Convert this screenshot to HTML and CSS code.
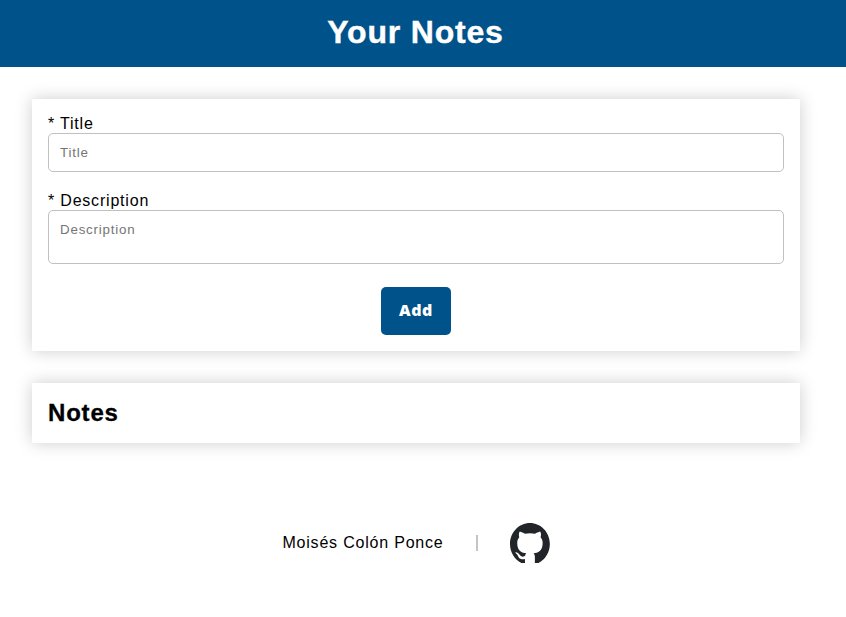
FILE: index.html
```html
<!DOCTYPE html>
<html lang="en">
<head>
<meta charset="utf-8">
<title>Your Notes</title>
<link rel="stylesheet" href="styles.css">
</head>
<body>
<header class="header"><h1>Your Notes</h1></header>
<main class="main">
  <form class="card form">
    <div class="field">
      <label for="title">* Title</label>
      <input id="title" type="text" placeholder="Title">
    </div>
    <div class="field">
      <label for="description">* Description</label>
      <textarea id="description" placeholder="Description"></textarea>
    </div>
    <button class="add" type="button">Add</button>
  </form>
  <section class="card notes"><h2>Notes</h2></section>
</main>
<footer class="footer">
  <span class="author">Moisés Colón Ponce</span>
  <span class="divider"></span>
  <svg class="github" viewBox="0 0 98 96" preserveAspectRatio="none" aria-label="GitHub"><path fill="#212529" fill-rule="evenodd" d="M48.854 0C21.839 0 0 22 0 49.217c0 21.756 13.993 40.172 33.405 46.69 2.427.49 3.316-1.059 3.316-2.362 0-1.141-.08-5.052-.08-9.127-13.59 2.934-16.42-5.867-16.42-5.867-2.184-5.704-5.42-7.17-5.42-7.17-4.448-3.015.324-3.015.324-3.015 4.934.326 7.523 5.052 7.523 5.052 4.367 7.496 11.404 5.378 14.235 4.074.404-3.178 1.699-5.378 3.074-6.6-10.839-1.141-22.243-5.378-22.243-24.283 0-5.378 1.94-9.778 5.014-13.2-.485-1.222-2.184-6.275.486-13.038 0 0 4.125-1.304 13.426 5.052a46.97 46.97 0 0 1 12.214-1.63c4.125 0 8.33.571 12.213 1.63 9.302-6.356 13.427-5.052 13.427-5.052 2.67 6.763.97 11.816.485 13.038 3.155 3.422 5.015 7.822 5.015 13.2 0 18.905-11.404 23.06-22.324 24.283 1.78 1.548 3.316 4.481 3.316 9.126 0 6.6-.08 11.897-.08 13.526 0 1.304.89 2.853 3.316 2.364 19.412-6.52 33.405-24.935 33.405-46.691C97.707 22 75.788 0 48.854 0z"/></svg>
</footer>
</body>
</html>
```

FILE: styles.css
```css
* { box-sizing: border-box; margin: 0; padding: 0; }
body {
  font-family: "Liberation Sans", Arial, sans-serif;
  font-size: 16px;
  letter-spacing: 0.8px;
  color: #000;
  background: #fff;
}
.header {
  height: 67px;
  padding: 14px 15px 0 0;
  background: #00528a;
  color: #fff;
  text-align: center;
}
.header h1 {
  font-size: 32px;
  line-height: 37px;
  -webkit-text-stroke: 0.4px #fff;
}
.main {
  width: 768px;
  margin: 32px 0 0 32px;
  display: flex;
  flex-direction: column;
  gap: 32px;
}
.card { background: #fff; box-shadow: 0 0 16px rgba(0, 0, 0, .2); padding: 16px; }
.form { height: 252px; display: flex; flex-direction: column; }
.field { display: flex; flex-direction: column; }
.field + .field { margin-top: 20px; }
.field label { line-height: 18px; }
.field input, .field textarea {
  width: 100%;
  border: 1px solid #c0c0c0;
  border-radius: 5px;
  padding: 11px;
  font: 13.333px/15px "Liberation Sans", Arial, sans-serif;
  letter-spacing: 0.8px;
  resize: none;
}
.field input { height: 39px; }
.field textarea { height: 54px; }
.field ::placeholder { color: #757575; }
.add {
  align-self: center;
  width: 70px;
  height: 48px;
  margin-top: 23px;
  padding-bottom: 2px;
  border: 0;
  border-radius: 5px;
  background: #00528a;
  color: #fff;
  font: 800 16px "Open Sans", Arial, sans-serif;
  letter-spacing: 0.6px;
}
.notes { height: 60px; }
.notes h2 {
  font-size: 24px;
  line-height: 28px;
  -webkit-text-stroke: 0.3px #000;
}
.footer {
  width: 832px;
  margin-top: 80px;
  display: flex;
  justify-content: center;
  align-items: center;
}
.divider { width: 2px; height: 16px; margin: 0 32px; background: #c4c4c4; }
.github { width: 40px; height: 41px; margin-bottom: -1px; }
```
